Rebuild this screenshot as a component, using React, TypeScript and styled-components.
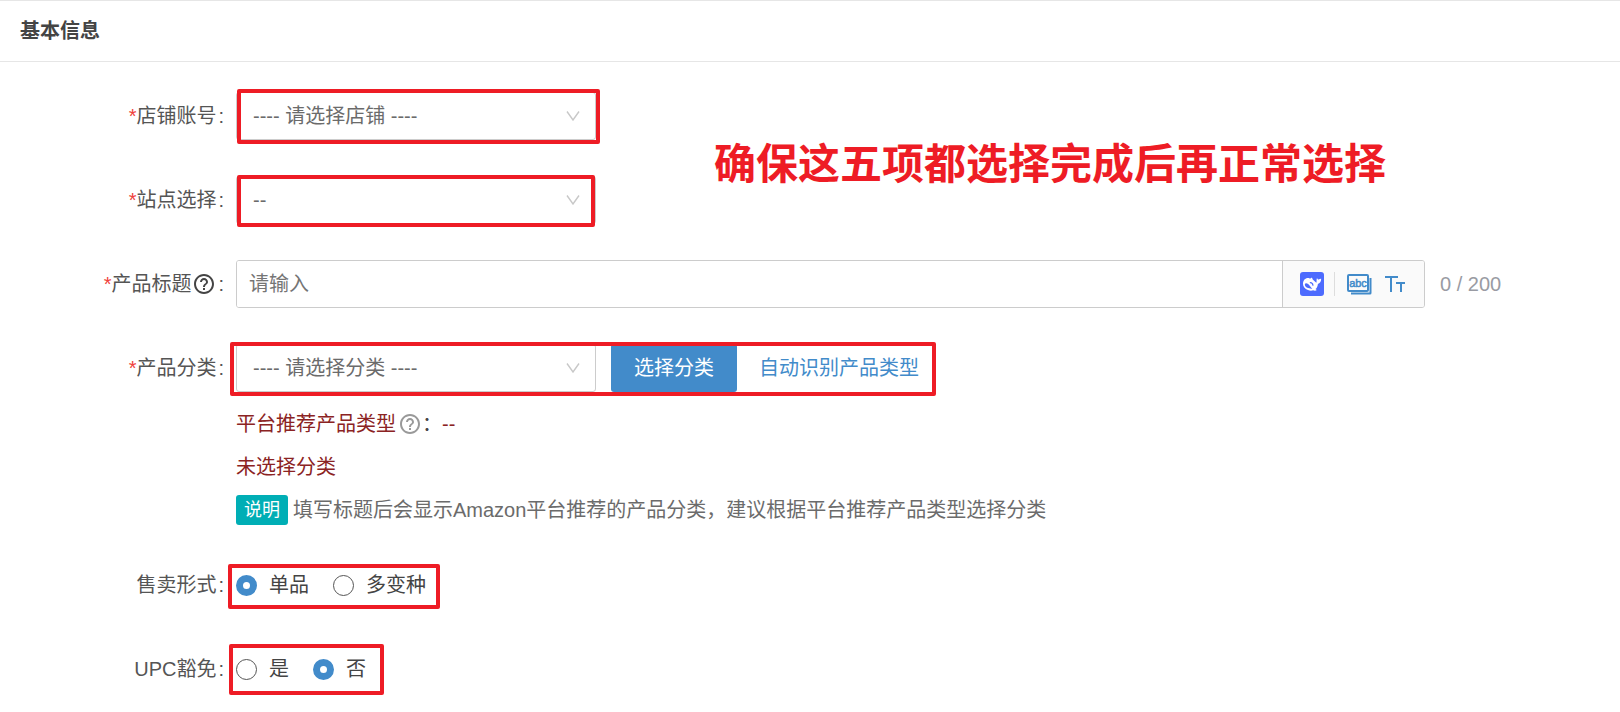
import React from 'react';
import styled, { createGlobalStyle } from 'styled-components';
import { MdHelpOutline } from 'react-icons/md';

const GlobalStyle = createGlobalStyle`
  *, *::before, *::after { box-sizing: border-box; }
  body {
    margin: 0;
    background: #fff;
    color: #444;
    font-family: "Liberation Sans", "Noto Sans CJK SC", sans-serif;
    font-size: 20px;
    line-height: 30px;
  }
  button, input, select { font: inherit; }
`;

const Card = styled.section`
  position: relative;
  border-top: 1px solid #e6e6e6;
`;

const CardHeader = styled.header`
  padding: 15px 20px;
  border-bottom: 1px solid #e6e6e6;
`;

const CardTitle = styled.h2`
  margin: 0;
  font-size: 20px;
  font-weight: 700;
`;

const Form = styled.form`
  display: flex;
  flex-direction: column;
  gap: 36px;
  padding: 30px 120px 20px 0;
`;

const FormRow = styled.div`
  display: flex;
`;

const LabelCell = styled.div`
  display: flex;
  flex: none;
  align-items: center;
  justify-content: flex-end;
  width: 236px;
  height: 48px;
  padding-right: 12px;
  color: #555;
`;

const Required = styled.span`
  color: #f0413c;
`;

const Colon = styled.span`
  margin-left: 2px;
`;

const HelpIcon = styled(MdHelpOutline)<{ $muted?: boolean }>`
  flex: none;
  width: 24px;
  height: 24px;
  margin: 0 0 0 ${p => (p.$muted ? '2px' : '1px')};
  color: ${p => (p.$muted ? '#999' : '#444')};
`;

const Control = styled.div`
  position: relative;
  display: flex;
  align-items: center;
  height: 48px;
`;

const ControlStack = styled.div<{ $grow?: boolean }>`
  display: flex;
  flex-direction: column;
  align-items: flex-start;
  flex: ${p => (p.$grow ? '1' : 'none')};
  min-width: 0;
`;

const Highlight = styled.span<{ $inset: string }>`
  position: absolute;
  inset: ${p => p.$inset};
  border: 4px solid #ee1c25;
  border-radius: 2px;
  pointer-events: none;
`;

const SelectBox = styled.div`
  position: relative;
  width: 360px;
`;

const Select = styled.select`
  width: 100%;
  height: 48px;
  padding: 0 40px 0 16px;
  border: 1px solid #ccc;
  border-radius: 3px;
  background: #fff;
  color: #6b6b6b;
  appearance: none;
`;

const Arrow = styled.svg`
  position: absolute;
  top: 19px;
  right: 16px;
  width: 14px;
  height: 10px;
  fill: none;
  stroke: #c8c8c8;
  stroke-width: 1.4;
  pointer-events: none;
`;

const TitleGroup = styled.div`
  display: flex;
  flex: 1;
  min-width: 0;
  height: 48px;
  border: 1px solid #ccc;
  border-radius: 3px;
  overflow: hidden;
`;

const TitleInput = styled.input`
  flex: 1;
  min-width: 0;
  padding: 0 12px;
  border: 0;
  color: #444;
  &::placeholder { color: #757575; opacity: 1; }
`;

const Tools = styled.div`
  display: flex;
  align-items: center;
  padding: 0 14px 0 17px;
  border-left: 1px solid #ccc;
  background: #fafafa;
`;

const ToolButton = styled.button`
  display: flex;
  align-items: center;
  justify-content: center;
  height: 24px;
  padding: 0;
  border: 0;
  background: none;
  color: #428bca;
  cursor: pointer;
`;

const AiButton = styled(ToolButton)`
  width: 24px;
  border-radius: 3px;
  background: #4d6bfe;
  color: #fff;
`;

const ToolDivider = styled.span`
  width: 1px;
  height: 24px;
  margin: 0 11px 0 10px;
  background: #ddd;
`;

const Counter = styled.span`
  flex: none;
  width: 75px;
  padding-left: 15px;
  color: #999ba3;
  white-space: nowrap;
`;

const PrimaryButton = styled.button`
  height: 48px;
  margin-left: 15px;
  padding: 0 23px;
  border: 0;
  border-radius: 3px;
  background: #428bca;
  color: #fff;
  cursor: pointer;
`;

const LinkButton = styled.button`
  height: 48px;
  padding: 0 20px 0 22px;
  border: 0;
  background: none;
  color: #428bca;
  cursor: pointer;
`;

const Notes = styled.div`
  display: flex;
  flex-direction: column;
  gap: 13px;
  padding-top: 17px;
`;

const Note = styled.div<{ $tone?: 'alert' }>`
  display: flex;
  align-items: center;
  color: ${p => (p.$tone === 'alert' ? '#8b2323' : '#6b6b6b')};
`;

const NoteColon = styled.span`
  color: #444;
`;

const Tag = styled.span`
  margin-right: 5px;
  padding: 0 8px;
  border-radius: 3px;
  background: #00aeb5;
  color: #fff;
  font-size: 18px;
`;

const RadioLabel = styled.label`
  display: flex;
  align-items: center;
  gap: 12px;
  margin-right: 24px;
  color: #444;
`;

const Radio = styled.input`
  width: 21px;
  height: 21px;
  margin: 0;
  border: 1px solid #555;
  border-radius: 50%;
  background: #fff;
  appearance: none;
  &:checked { border: 7px solid #428bca; }
`;

const Callout = styled.p`
  position: absolute;
  top: 134px;
  left: 714px;
  margin: 0;
  color: #ee1c25;
  font-size: 42px;
  font-weight: 700;
  line-height: 60px;
  white-space: nowrap;
`;

interface FieldProps {
  label: string;
  htmlFor?: string;
  id?: string;
  required?: boolean;
  help?: boolean;
  grow?: boolean;
  children: React.ReactNode;
}

function Field({ label, htmlFor, id, required, help, grow, children }: FieldProps) {
  return (
    <FormRow>
      <LabelCell>
        {required && <Required>*</Required>}
        {htmlFor ? <label htmlFor={htmlFor}>{label}</label> : <span id={id}>{label}</span>}
        {help && <HelpIcon />}
        <Colon>:</Colon>
      </LabelCell>
      <ControlStack $grow={grow}>{children}</ControlStack>
    </FormRow>
  );
}

function Dropdown({ id, text }: { id: string; text: string }) {
  return (
    <SelectBox>
      <Select id={id}>
        <option>{text}</option>
      </Select>
      <Arrow viewBox="0 0 14 10" aria-hidden="true">
        <path d="M1 .5 7 9 13 .5" />
      </Arrow>
    </SelectBox>
  );
}

interface RadiosProps {
  name: string;
  labelId: string;
  options: string[];
  selected: string;
  inset: string;
}

function Radios({ name, labelId, options, selected, inset }: RadiosProps) {
  return (
    <Control role="radiogroup" aria-labelledby={labelId}>
      {options.map(option => (
        <RadioLabel key={option}>
          <Radio type="radio" name={name} value={option} defaultChecked={option === selected} />
          {option}
        </RadioLabel>
      ))}
      <Highlight $inset={inset} />
    </Control>
  );
}

const WideControl = styled(Control)`
  width: 100%;
`;

function WhaleIcon() {
  return (
    <svg width="24" height="24" viewBox="0 0 24 24" aria-hidden="true">
      <path
        fill="currentColor"
        d="M3 12C3 8.300 5.200 6 8 6c1 0 1.500.5 2.300.5.600-.1.600-.9 1.300-.8.900.2.700 1.200 1.400 2 1 1.100 2.400 1.900 3.300 3 .7-.9-.2-2.600.7-4.800.6 1.200 1 1.500 1.700 1.600.8-.5 1.500-.9 2.500-.8-.1 2.700-1.300 4.800-3.300 5.200-.2 2.200-1 3.900-2.400 5.200.4.400.7.700 1.300 1-1.200.8-2.600.6-3.700.2-1.600.6-3.500.5-5.100-.4C4.800 16.800 3 14.600 3 12Z"
      />
      <path fill="#4d6bfe" d="M4.800 12.200c.4-1.300 2-1.200 3.300-.2 1.600 1.300 2.400 3.300 4.200 4.700-1.400.3-2.400-.6-3.200-.5-2.600-.2-4.300-2-4.300-4Z" />
      <path fill="none" stroke="#4d6bfe" strokeWidth="1.200" strokeLinecap="round" d="M10.300 10.600c1.500.1 2.500 1.200 2.600 2.600" />
    </svg>
  );
}

export default function App() {
  return (
    <>
      <GlobalStyle />
      <Card>
        <CardHeader>
          <CardTitle>基本信息</CardTitle>
        </CardHeader>
        <Form>
          <Field label="店铺账号" htmlFor="shop" required>
            <Control>
              <Dropdown id="shop" text="---- 请选择店铺 ----" />
              <Highlight $inset="-3px -4px -4px 1px" />
            </Control>
          </Field>
          <Field label="站点选择" htmlFor="site" required>
            <Control>
              <Dropdown id="site" text="--" />
              <Highlight $inset="-1px 1px -3px 1px" />
            </Control>
          </Field>
          <Field label="产品标题" htmlFor="title" required help grow>
            <WideControl>
              <TitleGroup>
                <TitleInput id="title" type="text" placeholder="请输入" />
                <Tools>
                  <AiButton type="button" aria-label="AI">
                    <WhaleIcon />
                  </AiButton>
                  <ToolDivider />
                  <ToolButton type="button" aria-label="abc">
                    <svg width="26" height="22" viewBox="0 0 26 22" fill="none" stroke="currentColor" strokeWidth="2">
                      <rect x="2" y="2" width="20" height="16" rx="1" />
                      <path d="M24.500 5v15q0 .5-.5.5H5" />
                      <text x="12" y="14" textAnchor="middle" fontSize="11" fontWeight="400" fill="currentColor" stroke="currentColor" strokeWidth=".5">abc</text>
                    </svg>
                  </ToolButton>
                  <ToolButton type="button" aria-label="Tt">
                    <svg width="38" height="20" viewBox="0 0 38 20" fill="none" stroke="currentColor" strokeWidth="2">
                      <path d="M13 3H26M19 3V18M24 9H33M29 9V18" />
                    </svg>
                  </ToolButton>
                </Tools>
              </TitleGroup>
              <Counter>0 / 200</Counter>
            </WideControl>
          </Field>
          <Field label="产品分类" htmlFor="category" required>
            <Control>
              <Dropdown id="category" text="---- 请选择分类 ----" />
              <PrimaryButton type="button">选择分类</PrimaryButton>
              <LinkButton type="button">自动识别产品类型</LinkButton>
              <Highlight $inset="-2px 3px -4px -6px" />
            </Control>
            <Notes>
              <Note $tone="alert">
                平台推荐产品类型
                <HelpIcon $muted />
                <NoteColon>：</NoteColon>
                --
              </Note>
              <Note $tone="alert">未选择分类</Note>
              <Note>
                <Tag>说明</Tag>
                填写标题后会显示Amazon平台推荐的产品分类，建议根据平台推荐产品类型选择分类
              </Note>
            </Notes>
          </Field>
          <Field label="售卖形式" id="form-label">
            <Radios name="form" labelId="form-label" options={['单品', '多变种']} selected="单品" inset="3px 10px 0 -8px" />
          </Field>
          <Field label="UPC豁免" id="upc-label">
            <Radios name="upc" labelId="upc-label" options={['是', '否']} selected="否" inset="-1px 6px -2px -7px" />
          </Field>
        </Form>
        <Callout>确保这五项都选择完成后再正常选择</Callout>
      </Card>
    </>
  );
}
